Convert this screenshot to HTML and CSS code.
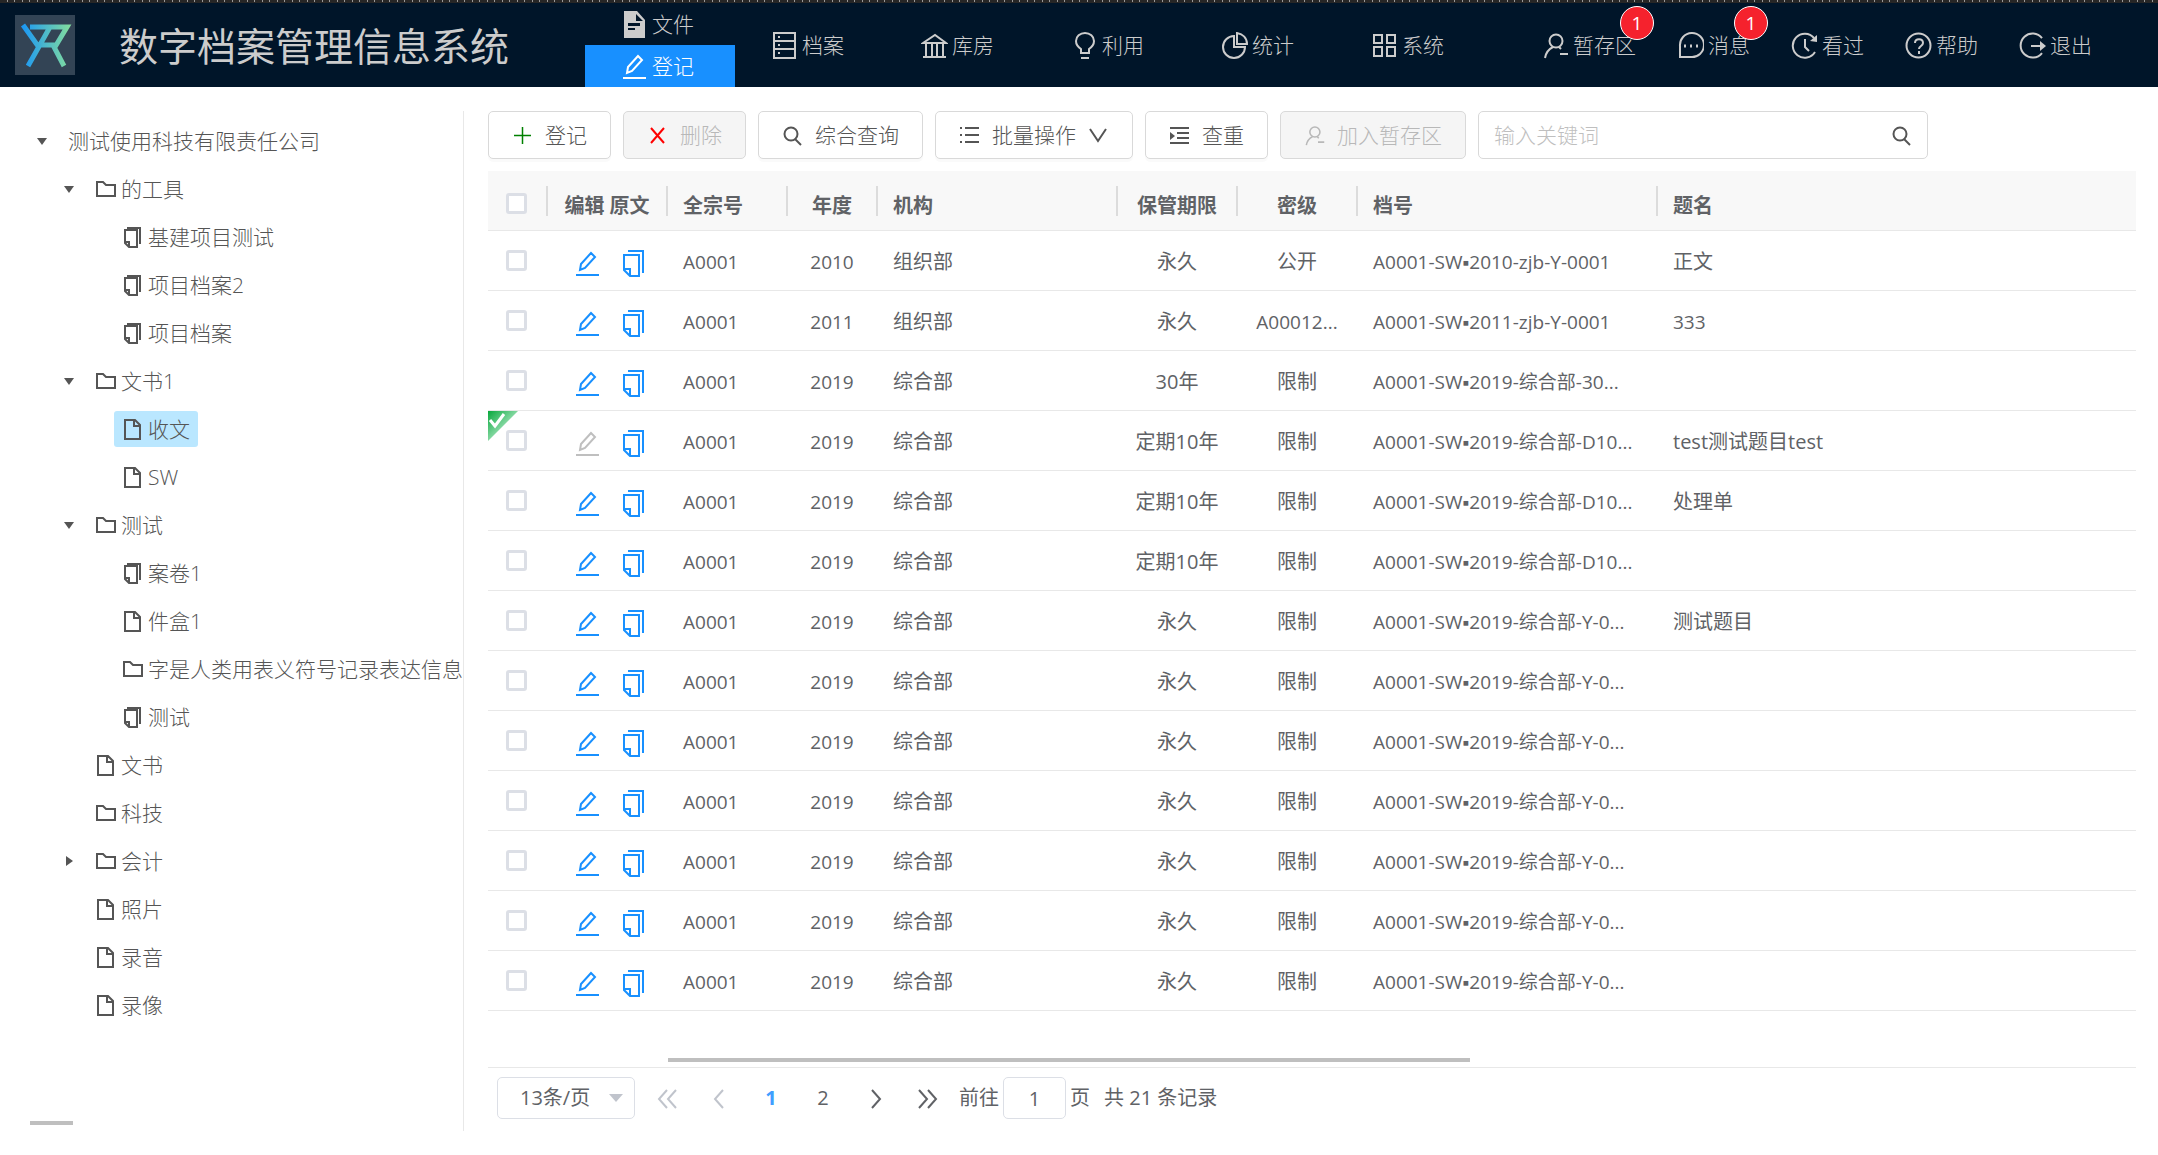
FILE: index.html
```html
<!DOCTYPE html>
<html lang="zh-CN">
<head>
<meta charset="utf-8">
<meta name="viewport" content="width=device-width, initial-scale=1">
<title>数字档案管理信息系统</title>
<link rel="stylesheet" href="styles.css">
</head>
<body>
<svg class="sprite" aria-hidden="true">
  <symbol id="i-file-solid" viewBox="0 0 27 27"><path fill="currentColor" stroke="none" fill-rule="evenodd" d="M3 0h13l8 9v18H3zM15 3v7h7zM7 12v3h12v-3zM7 17v2h7v-2z"/></symbol>
  <symbol id="i-edit" viewBox="0 0 27 27"><path d="M6 20l1-6L17 3l4 4-10 11zM2 25h23"/></symbol>
  <symbol id="i-cabinet" viewBox="0 0 27 27"><path d="M3 1h21v25H3zM3 9h21M3 17h21"/><path d="M7 5h2M7 13h2M7 21h2"/></symbol>
  <symbol id="i-bank" viewBox="0 0 27 27"><path d="M2 25h23M2 11L14 3l11 8zM5 11v14M11 11v14M16 11v14M22 11v14"/></symbol>
  <symbol id="i-bulb" viewBox="0 0 27 27"><path d="M10 21v-4c-3-2-5-4-5-8a9 8 0 0 1 18 0c0 4-2 6-5 8v4zM10 26h8"/></symbol>
  <symbol id="i-pie" viewBox="0 0 27 27"><path d="M13 4a11 11 0 1 0 11 11H13zM16 1v11h10c0-6-4-10-10-11z"/></symbol>
  <symbol id="i-grid" viewBox="0 0 27 27"><path d="M3 3h8v8H3zM16 3h8v8h-8zM3 15h8v9H3zM16 15h8v9h-8z"/></symbol>
  <symbol id="i-user" viewBox="0 0 27 27"><circle cx="14" cy="9" r="6.500"/><path d="M11 15c-4 2-7 5-8 11M18 22h8M17 15l2 2"/></symbol>
  <symbol id="i-message" viewBox="0 0 27 27"><path d="M3 25V14A12 12 0 1 1 14 25z"/><path stroke-width="3" d="M7 14h2M13 14h2M19 14h2"/></symbol>
  <symbol id="i-history" viewBox="0 0 27 27"><path d="M24 20A12 12 0 1 1 23 6M14 7v8l4 4"/><path fill="currentColor" stroke="none" d="M26 3v7l-7-1z"/></symbol>
  <symbol id="i-help" viewBox="0 0 27 27"><circle cx="13.500" cy="13.500" r="12"/><path d="M10 11c0-5 8-5 8 0 0 3-4 3-4 6M14 19v3"/></symbol>
  <symbol id="i-exit" viewBox="0 0 27 27"><path d="M23 6a12 12 0 1 0 0 15M12 14h11"/><path fill="currentColor" stroke="none" d="M21 9l6 5-6 5z"/></symbol>
  <symbol id="i-folder" viewBox="0 0 21 21"><path d="M2 3h6l3 3h9v11H2z"/></symbol>
  <symbol id="i-doc" viewBox="0 0 21 21"><path d="M3 1h10l5 5v14H3zM12 1v6h6"/></symbol>
  <symbol id="i-copy" viewBox="0 0 21 21"><path d="M3 3h12v17H7l-4-4zM3 15h4v5M6 0v1h12v16"/></symbol>
  <symbol id="i-copy-big" viewBox="0 0 27 27"><path d="M4 5h15v21H10l-6-6zM4 19h6v7M8 1h15v22"/></symbol>
  <symbol id="i-plus" viewBox="0 0 21 21"><path stroke-width="1.500" d="M10.500 2v17M2 10.500h17"/></symbol>
  <symbol id="i-cross" viewBox="0 0 21 21"><path d="M4 3l13 15M17 3L4 18"/></symbol>
  <symbol id="i-search" viewBox="0 0 21 21"><circle cx="9" cy="9" r="6.500"/><path d="M13 14l6 6"/></symbol>
  <symbol id="i-list" viewBox="0 0 21 21"><path d="M6 3h14M6 10h14M6 17h14M1 3h2M1 10h2M1 17h2"/></symbol>
  <symbol id="i-down" viewBox="0 0 21 21"><path d="M2 4l8 12 8-12"/></symbol>
  <symbol id="i-indent" viewBox="0 0 21 21"><path d="M1 3h19M8 8h12M8 13h12M1 18h19"/><path fill="currentColor" stroke="none" d="M1 7l5 4-5 4z"/></symbol>
  <symbol id="i-left" viewBox="0 0 21 21"><path d="M14 2l-8 9 8 9"/></symbol>
  <symbol id="i-right" viewBox="0 0 21 21"><path d="M7 2l8 9-8 9"/></symbol>
  <symbol id="i-first" viewBox="0 0 21 21"><path d="M10 2l-8 9 8 9M19 2l-8 9 8 9"/></symbol>
  <symbol id="i-last" viewBox="0 0 21 21"><path d="M2 2l8 9-8 9M11 2l8 9-8 9"/></symbol>
</svg>

<header class="header">
  <svg class="logo" viewBox="0 0 60 60" role="img" aria-label="标志">
    <defs><linearGradient id="brand" gradientUnits="userSpaceOnUse" x1="8" y1="0" x2="54" y2="0"><stop offset="0" stop-color="#1c98f3"/><stop offset="1" stop-color="#80dca0"/></linearGradient></defs>
    <rect width="60" height="60" fill="#334455"/>
    <path fill="none" stroke="url(#brand)" stroke-width="5" d="M8 10l15 21M13 51l22-39M15 12h37L40 32M22 30h16L49 51"/>
  </svg>
  <h1 class="title">数字档案管理信息系统</h1>
  <nav class="nav">
    <div class="nav-stack">
      <a class="nav-item nav-half" href="#"><svg class="icon"><use href="#i-file-solid"/></svg>文件</a>
      <a class="nav-item nav-half nav-active" href="#"><svg class="icon"><use href="#i-edit"/></svg>登记</a>
    </div>
    <a class="nav-item" href="#"><svg class="icon"><use href="#i-cabinet"/></svg>档案</a>
    <a class="nav-item" href="#"><svg class="icon"><use href="#i-bank"/></svg>库房</a>
    <a class="nav-item" href="#"><svg class="icon"><use href="#i-bulb"/></svg>利用</a>
    <a class="nav-item" href="#"><svg class="icon"><use href="#i-pie"/></svg>统计</a>
    <a class="nav-item" href="#"><svg class="icon"><use href="#i-grid"/></svg>系统</a>
  </nav>
  <div class="tools">
    <a class="tool" href="#"><svg class="icon"><use href="#i-user"/></svg>暂存区<span class="badge">1</span></a>
    <a class="tool" href="#"><svg class="icon"><use href="#i-message"/></svg>消息<span class="badge">1</span></a>
    <a class="tool" href="#"><svg class="icon"><use href="#i-history"/></svg>看过</a>
    <a class="tool" href="#"><svg class="icon"><use href="#i-help"/></svg>帮助</a>
    <a class="tool" href="#"><svg class="icon"><use href="#i-exit"/></svg>退出</a>
  </div>
</header>

<div class="layout">
  <aside class="sidebar">
    <ul class="tree">
      <li><div class="node"><span class="caret open"></span><a class="label" href="#">测试使用科技有限责任公司</a></div>
        <ul>
          <li><div class="node"><span class="caret open"></span><a class="label" href="#"><svg class="icon-s"><use href="#i-folder"/></svg>的工具</a></div>
            <ul>
              <li><div class="node"><span class="caret"></span><a class="label" href="#"><svg class="icon-s"><use href="#i-copy"/></svg>基建项目测试</a></div></li>
              <li><div class="node"><span class="caret"></span><a class="label" href="#"><svg class="icon-s"><use href="#i-copy"/></svg>项目档案2</a></div></li>
              <li><div class="node"><span class="caret"></span><a class="label" href="#"><svg class="icon-s"><use href="#i-copy"/></svg>项目档案</a></div></li>
            </ul>
          </li>
          <li><div class="node"><span class="caret open"></span><a class="label" href="#"><svg class="icon-s"><use href="#i-folder"/></svg>文书1</a></div>
            <ul>
              <li><div class="node"><span class="caret"></span><a class="label selected" href="#"><svg class="icon-s"><use href="#i-doc"/></svg>收文</a></div></li>
              <li><div class="node"><span class="caret"></span><a class="label" href="#"><svg class="icon-s"><use href="#i-doc"/></svg>SW</a></div></li>
            </ul>
          </li>
          <li><div class="node"><span class="caret open"></span><a class="label" href="#"><svg class="icon-s"><use href="#i-folder"/></svg>测试</a></div>
            <ul>
              <li><div class="node"><span class="caret"></span><a class="label" href="#"><svg class="icon-s"><use href="#i-copy"/></svg>案卷1</a></div></li>
              <li><div class="node"><span class="caret"></span><a class="label" href="#"><svg class="icon-s"><use href="#i-doc"/></svg>件盒1</a></div></li>
              <li><div class="node"><span class="caret"></span><a class="label" href="#"><svg class="icon-s"><use href="#i-folder"/></svg>字是人类用表义符号记录表达信息</a></div></li>
              <li><div class="node"><span class="caret"></span><a class="label" href="#"><svg class="icon-s"><use href="#i-copy"/></svg>测试</a></div></li>
            </ul>
          </li>
          <li><div class="node"><span class="caret"></span><a class="label" href="#"><svg class="icon-s"><use href="#i-doc"/></svg>文书</a></div></li>
          <li><div class="node"><span class="caret"></span><a class="label" href="#"><svg class="icon-s"><use href="#i-folder"/></svg>科技</a></div></li>
          <li><div class="node"><span class="caret closed"></span><a class="label" href="#"><svg class="icon-s"><use href="#i-folder"/></svg>会计</a></div></li>
          <li><div class="node"><span class="caret"></span><a class="label" href="#"><svg class="icon-s"><use href="#i-doc"/></svg>照片</a></div></li>
          <li><div class="node"><span class="caret"></span><a class="label" href="#"><svg class="icon-s"><use href="#i-doc"/></svg>录音</a></div></li>
          <li><div class="node"><span class="caret"></span><a class="label" href="#"><svg class="icon-s"><use href="#i-doc"/></svg>录像</a></div></li>
        </ul>
      </li>
    </ul>
    <div class="side-scroll"></div>
  </aside>

  <main class="main">
    <div class="toolbar">
      <button class="btn" type="button"><svg class="icon-s green"><use href="#i-plus"/></svg>登记</button>
      <button class="btn" type="button" disabled><svg class="icon-s red"><use href="#i-cross"/></svg>删除</button>
      <button class="btn" type="button"><svg class="icon-s"><use href="#i-search"/></svg>综合查询</button>
      <button class="btn" type="button"><svg class="icon-s"><use href="#i-list"/></svg>批量操作<svg class="icon-s"><use href="#i-down"/></svg></button>
      <button class="btn" type="button"><svg class="icon-s"><use href="#i-indent"/></svg>查重</button>
      <button class="btn" type="button" disabled><svg class="icon-s"><use href="#i-user"/></svg>加入暂存区</button>
      <label class="search"><input type="text" placeholder="输入关键词" aria-label="输入关键词"><svg class="icon-s"><use href="#i-search"/></svg></label>
    </div>

    <table class="grid">
      <colgroup><col class="c-check"><col class="c-m"><col class="c-m"><col class="c-year"><col class="c-org"><col class="c-m"><col class="c-m"><col class="c-no"><col></colgroup>
      <thead>
        <tr><th class="check"><input type="checkbox" aria-label="全选"></th><th class="mid">编辑 原文</th><th>全宗号</th><th class="mid">年度</th><th>机构</th><th class="mid">保管期限</th><th class="mid">密级</th><th>档号</th><th>题名</th></tr>
      </thead>
      <tbody>
        <tr><td class="check"><input type="checkbox" aria-label="选择"></td><td class="ops"><svg class="icon"><use href="#i-edit"/></svg><svg class="icon"><use href="#i-copy-big"/></svg></td><td class="num">A0001</td><td class="mid num">2010</td><td>组织部</td><td class="mid">永久</td><td class="mid">公开</td><td class="num">A0001-SW▪2010-zjb-Y-0001</td><td>正文</td></tr>
        <tr><td class="check"><input type="checkbox" aria-label="选择"></td><td class="ops"><svg class="icon"><use href="#i-edit"/></svg><svg class="icon"><use href="#i-copy-big"/></svg></td><td class="num">A0001</td><td class="mid num">2011</td><td>组织部</td><td class="mid">永久</td><td class="mid num">A00012...</td><td class="num">A0001-SW▪2011-zjb-Y-0001</td><td class="num">333</td></tr>
        <tr><td class="check"><input type="checkbox" aria-label="选择"></td><td class="ops"><svg class="icon"><use href="#i-edit"/></svg><svg class="icon"><use href="#i-copy-big"/></svg></td><td class="num">A0001</td><td class="mid num">2019</td><td>综合部</td><td class="mid">30年</td><td class="mid">限制</td><td class="num">A0001-SW▪2019-综合部-30...</td><td></td></tr>
        <tr><td class="check"><svg class="corner" viewBox="0 0 30 30"><defs><linearGradient id="done" x1="0" y1="0" x2="1" y2="1"><stop offset="0" stop-color="#08a83c"/><stop offset="0.550" stop-color="#8fdcaa"/></linearGradient></defs><path fill="url(#done)" d="M0 0h30L0 30z"/><path fill="none" stroke="#fff" stroke-width="3" d="M2 9l5 6 9-12"/></svg><input type="checkbox" aria-label="选择"></td><td class="ops"><svg class="icon muted"><use href="#i-edit"/></svg><svg class="icon"><use href="#i-copy-big"/></svg></td><td class="num">A0001</td><td class="mid num">2019</td><td>综合部</td><td class="mid">定期10年</td><td class="mid">限制</td><td class="num">A0001-SW▪2019-综合部-D10...</td><td>test测试题目test</td></tr>
        <tr><td class="check"><input type="checkbox" aria-label="选择"></td><td class="ops"><svg class="icon"><use href="#i-edit"/></svg><svg class="icon"><use href="#i-copy-big"/></svg></td><td class="num">A0001</td><td class="mid num">2019</td><td>综合部</td><td class="mid">定期10年</td><td class="mid">限制</td><td class="num">A0001-SW▪2019-综合部-D10...</td><td>处理单</td></tr>
        <tr><td class="check"><input type="checkbox" aria-label="选择"></td><td class="ops"><svg class="icon"><use href="#i-edit"/></svg><svg class="icon"><use href="#i-copy-big"/></svg></td><td class="num">A0001</td><td class="mid num">2019</td><td>综合部</td><td class="mid">定期10年</td><td class="mid">限制</td><td class="num">A0001-SW▪2019-综合部-D10...</td><td></td></tr>
        <tr><td class="check"><input type="checkbox" aria-label="选择"></td><td class="ops"><svg class="icon"><use href="#i-edit"/></svg><svg class="icon"><use href="#i-copy-big"/></svg></td><td class="num">A0001</td><td class="mid num">2019</td><td>综合部</td><td class="mid">永久</td><td class="mid">限制</td><td class="num">A0001-SW▪2019-综合部-Y-0...</td><td>测试题目</td></tr>
        <tr><td class="check"><input type="checkbox" aria-label="选择"></td><td class="ops"><svg class="icon"><use href="#i-edit"/></svg><svg class="icon"><use href="#i-copy-big"/></svg></td><td class="num">A0001</td><td class="mid num">2019</td><td>综合部</td><td class="mid">永久</td><td class="mid">限制</td><td class="num">A0001-SW▪2019-综合部-Y-0...</td><td></td></tr>
        <tr><td class="check"><input type="checkbox" aria-label="选择"></td><td class="ops"><svg class="icon"><use href="#i-edit"/></svg><svg class="icon"><use href="#i-copy-big"/></svg></td><td class="num">A0001</td><td class="mid num">2019</td><td>综合部</td><td class="mid">永久</td><td class="mid">限制</td><td class="num">A0001-SW▪2019-综合部-Y-0...</td><td></td></tr>
        <tr><td class="check"><input type="checkbox" aria-label="选择"></td><td class="ops"><svg class="icon"><use href="#i-edit"/></svg><svg class="icon"><use href="#i-copy-big"/></svg></td><td class="num">A0001</td><td class="mid num">2019</td><td>综合部</td><td class="mid">永久</td><td class="mid">限制</td><td class="num">A0001-SW▪2019-综合部-Y-0...</td><td></td></tr>
        <tr><td class="check"><input type="checkbox" aria-label="选择"></td><td class="ops"><svg class="icon"><use href="#i-edit"/></svg><svg class="icon"><use href="#i-copy-big"/></svg></td><td class="num">A0001</td><td class="mid num">2019</td><td>综合部</td><td class="mid">永久</td><td class="mid">限制</td><td class="num">A0001-SW▪2019-综合部-Y-0...</td><td></td></tr>
        <tr><td class="check"><input type="checkbox" aria-label="选择"></td><td class="ops"><svg class="icon"><use href="#i-edit"/></svg><svg class="icon"><use href="#i-copy-big"/></svg></td><td class="num">A0001</td><td class="mid num">2019</td><td>综合部</td><td class="mid">永久</td><td class="mid">限制</td><td class="num">A0001-SW▪2019-综合部-Y-0...</td><td></td></tr>
        <tr><td class="check"><input type="checkbox" aria-label="选择"></td><td class="ops"><svg class="icon"><use href="#i-edit"/></svg><svg class="icon"><use href="#i-copy-big"/></svg></td><td class="num">A0001</td><td class="mid num">2019</td><td>综合部</td><td class="mid">永久</td><td class="mid">限制</td><td class="num">A0001-SW▪2019-综合部-Y-0...</td><td></td></tr>
      </tbody>
    </table>
    <div class="grid-scroll"><div class="grid-thumb"></div></div>

    <div class="pager">
      <span class="page-size"><select aria-label="每页条数"><option>13条/页</option></select></span>
      <button class="page" type="button" aria-label="首页" disabled><svg class="icon-s"><use href="#i-first"/></svg></button>
      <button class="page" type="button" aria-label="上一页" disabled><svg class="icon-s"><use href="#i-left"/></svg></button>
      <button class="page current" type="button">1</button>
      <button class="page" type="button">2</button>
      <button class="page" type="button" aria-label="下一页"><svg class="icon-s"><use href="#i-right"/></svg></button>
      <button class="page" type="button" aria-label="末页"><svg class="icon-s"><use href="#i-last"/></svg></button>
      <label class="jump">前往<input type="text" value="1">页</label>
      <span class="total">共 21 条记录</span>
    </div>
  </main>
</div>
</body>
</html>
```
FILE: styles.css
```css
* { box-sizing: border-box; }

body {
  margin: 0;
  background: #fff;
  color: #555;
  font: 300 21px/32px "Open Sans", "Liberation Sans", "Noto Sans CJK SC", sans-serif;
}

a { color: inherit; text-decoration: none; }
ul { list-style: none; margin: 0; padding: 0; }
button, input, select { font: inherit; color: inherit; }

.sprite { position: absolute; width: 0; height: 0; }
.icon, .icon-s { flex: none; fill: none; stroke: currentColor; stroke-width: 2; }
.icon { width: 27px; height: 27px; }
.icon-s { width: 21px; height: 21px; }

/* header */
.header {
  display: flex;
  align-items: center;
  height: 87px;
  padding: 3px 66px 0 15px;
  color: #ccc;
  background:
    repeating-linear-gradient(90deg, transparent 0 7px, #999 7px 8px, transparent 8px 14px, #999 14px 15px) 0 0 / 100% 2px no-repeat,
    linear-gradient(#262626 0 3px, #001529 3px);
}
.logo { width: 60px; height: 60px; flex: none; }
.title { margin: 0 0 0 44px; padding-top: 2px; font-size: 39px; line-height: 60px; font-weight: 400; white-space: nowrap; }
.nav { display: flex; align-self: stretch; margin-left: 76px; }
.nav-stack { display: flex; flex-direction: column; }
.nav-item { display: flex; align-items: center; gap: 4px; width: 150px; padding-left: 36px; white-space: nowrap; }
.nav-half { height: 42px; }
.nav-active { background: #1890ff; color: #fff; }
.tools { display: flex; gap: 41px; margin-left: auto; }
.tool { position: relative; display: flex; align-items: center; gap: 4px; white-space: nowrap; }
.badge {
  position: absolute;
  right: -18px;
  top: -23px;
  width: 34px;
  height: 34px;
  border: 1px solid #fff;
  border-radius: 50%;
  background: #f5222d;
  color: #fff;
  font-size: 19px;
  font-weight: 400;
  text-align: center;
}

/* page columns */
.layout {
  display: grid;
  grid-template-columns: 464px minmax(0, 1fr);
  column-gap: 24px;
  min-height: calc(100vh - 87px);
  padding: 24px 22px 24px 0;
}
.sidebar { display: flex; flex-direction: column; border-right: 1px solid #e8e8e8; overflow: hidden; }
.tree { padding: 6px 0 0 24px; }
.tree ul { padding-left: 27px; }
.node { display: flex; align-items: center; height: 48px; white-space: nowrap; }
.caret { display: flex; justify-content: center; flex: none; width: 36px; }
.open::before { content: ""; border: 5px solid transparent; border-top: 7px solid #555; border-bottom: 0; }
.closed::before { content: ""; border: 5px solid transparent; border-left: 7px solid #555; border-right: 0; }
.label { display: flex; align-items: center; gap: 5px; height: 36px; padding: 0 8px; border-radius: 3px; }
.selected { background: #bae7ff; }
.side-scroll { width: 43px; height: 4px; margin: auto 0 6px 30px; background: #bfbfbf; }

/* toolbar */
.toolbar { display: flex; gap: 12px; margin-bottom: 12px; }
.btn {
  display: flex;
  align-items: center;
  gap: 12px;
  height: 48px;
  padding: 0 23px;
  border: 1px solid #d9d9d9;
  border-radius: 5px;
  background: #fff;
  box-shadow: 0 3px 0 rgba(0, 0, 0, 0.02);
  white-space: nowrap;
}
.btn:disabled { background: #f5f5f5; color: #b8b8b8; box-shadow: none; }
.btn .green { color: #008000; }
.btn .red { color: #f00; }
.search { display: flex; align-items: center; flex: 0 1 450px; height: 48px; padding: 0 15px; border: 1px solid #d9d9d9; border-radius: 5px; }
.search input { flex: 1; min-width: 0; padding: 0; border: 0; outline: 0; background: none; }
.search input::placeholder { color: #bfbfbf; opacity: 1; }

/* data table */
.grid { width: 100%; table-layout: fixed; border-collapse: separate; border-spacing: 0; color: #606266; font-size: 20px; font-weight: 400; }
.grid th, .grid td { height: 60px; padding: 2px 15px 0; border-bottom: 1px solid #e8e8e8; text-align: left; white-space: nowrap; overflow: hidden; }
.grid th { padding-top: 10px; background: linear-gradient(#dcdcdc, #dcdcdc) 100% 15px / 2px 30px no-repeat #f8f8f8; font-weight: 700; }
.grid th:last-child { background: #f8f8f8; }
.grid .mid { padding-left: 8px; padding-right: 10px; text-align: center; }
.grid .num { font-size: 19px; }
.c-check { width: 60px; }
.c-m { width: 120px; }
.c-year { width: 90px; }
.c-org { width: 240px; }
.c-no { width: 300px; }
.grid .check { position: relative; padding: 0 0 0 18px; line-height: 0; }
.grid th.check { padding-top: 5px; }
.grid input { appearance: none; width: 21px; height: 21px; margin: 0; border: 3px solid #dcdfe6; border-radius: 3px; background: #fff; vertical-align: middle; }
.grid .ops { padding: 6px 0 0 26px; color: #1890ff; line-height: 0; }
.ops .icon + .icon { margin-left: 19px; }
.ops .muted { color: #bfbfbf; }
.corner { position: absolute; left: 0; top: 0; width: 30px; height: 30px; }
.grid-scroll { padding: 47px 0 5px 180px; border-bottom: 1px solid #e8e8e8; }
.grid-thumb { width: 55%; max-width: 802px; height: 4px; background: #bfbfbf; }

/* pagination */
.pager { display: flex; align-items: center; padding: 9px 0 0 9px; color: #606266; font-size: 20px; font-weight: 400; }
.page-size { position: relative; width: 138px; margin-right: 6px; }
.page-size select { appearance: none; width: 100%; height: 42px; padding: 0 22px; border: 1px solid #dcdfe6; border-radius: 5px; background: #fff; }
.page-size::after { content: ""; position: absolute; right: 12px; top: 17px; border: 7px solid transparent; border-top: 8px solid #c0c4cc; border-bottom: 0; pointer-events: none; }
.page { display: flex; align-items: center; justify-content: center; width: 52px; height: 42px; padding: 0; border: 0; background: none; }
.page:disabled { color: #c0c4cc; }
.current { color: #409eff; font-weight: 700; }
.jump { display: flex; align-items: center; gap: 4px; margin-left: 6px; }
.jump input { width: 63px; height: 42px; border: 1px solid #dcdfe6; border-radius: 5px; text-align: center; }
.total { margin-left: 14px; }
```
